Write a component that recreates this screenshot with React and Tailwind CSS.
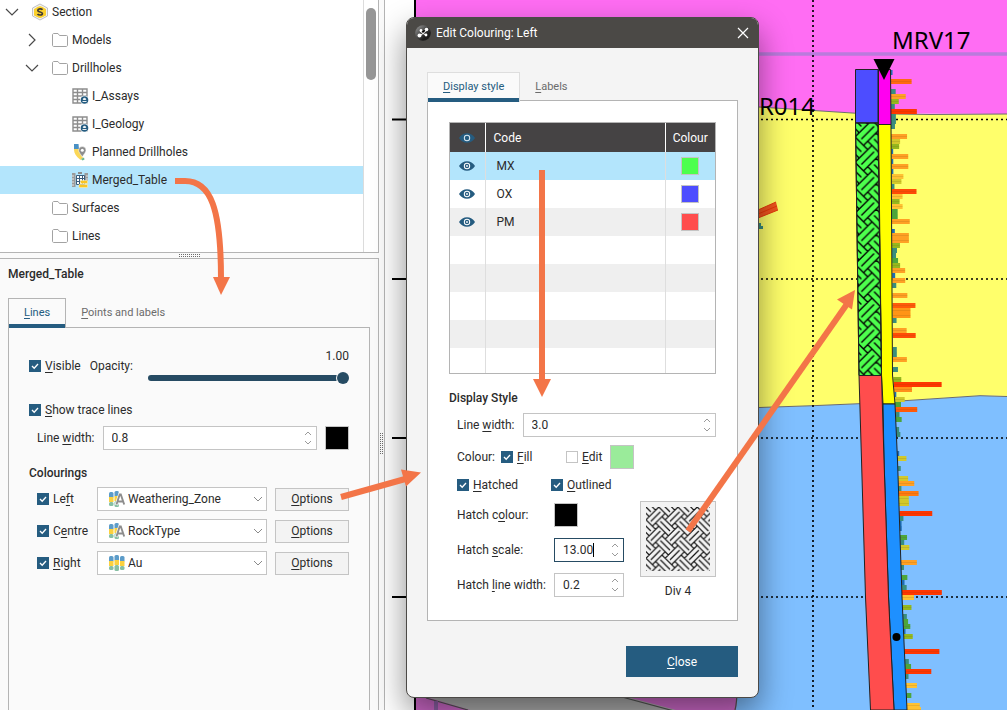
import { useId, useState } from 'react';
import clsx from 'clsx';

/* ---------- icons ---------- */

function Chevron({ open }) {
  return (
    <svg viewBox="0 0 16 16" className="size-4" fill="none" stroke="#4a4a4a" strokeWidth="1.2">
      <path d={open ? 'M2 5l6 6 6-6' : 'M5 2l6 6-6 6'} />
    </svg>
  );
}

function SectionIcon() {
  return (
    <svg viewBox="0 0 16 16" className="size-4 overflow-visible">
      <path d="M8 0l7.5 4v8L8 16 .5 12V4z" fill="#f1f1f1" stroke="#b5b5b5" strokeWidth="0.8" />
      <path d="M8 2.5l6 2.5v6.5L8 14l-6-2.500V5z" fill="#fbd02c" />
      <circle cx="8" cy="8" r="5.800" fill="#fbd02c" />
      <path d="M10.500 5.800C9.500 4.500 5.800 4.600 5.800 6.500c0 2 4.600 1 4.600 3 0 1.900-3.800 1.900-4.900.4" fill="none" stroke="#3d3a33" strokeWidth="1.700" />
    </svg>
  );
}

function FolderIcon() {
  return (
    <svg viewBox="0 0 16 16" className="size-4" fill="#fff" stroke="#a3a3a3">
      <path d="M.5 3c0-.8.4-1.500 1.200-1.500h4.300l1.500 2h7c.7 0 1 .5 1 1v8.500c0 .8-.4 1.500-1.200 1.500H1.700C.9 14.500.5 14 .5 13z" />
    </svg>
  );
}

function TableIcon() {
  return (
    <svg viewBox="0 0 16 16" className="size-4 overflow-visible">
      <path d="M1 1h14v14H1zM1 4.500h14M1 8h14M1 11.500h14M5.500 1v14M10.500 1v14" fill="#fff" stroke="#8d8d8d" strokeWidth="1.400" />
      <circle cx="12.500" cy="12" r="4.500" fill="#fff" />
      <circle cx="12.500" cy="12" r="3.800" fill="#255c80" />
      <path d="M10.500 13.500h4M11.300 11.500a1.200 1.200 0 0 1 2.400 0z" fill="#fff" stroke="#fff" strokeWidth="0.9" />
    </svg>
  );
}

function PlannedIcon() {
  return (
    <svg viewBox="0 0 16 16" className="size-4 overflow-visible">
      <path d="M2 0h4.500l.5 5H2z" fill="#4a90c4" />
      <path d="M2 5h4.500l4.500 9-2.500 2C5 13 2 10 2 5z" fill="#fbd758" />
      <path d="M9 15l3-1.500.5 2-2 1z" fill="#6db58f" />
      <path d="M10.300 2.500a3.700 3.700 0 0 1 3.700 3.700c0 2.300-2.200 3.800-3.700 6.800-1.500-3-3.700-4.500-3.700-6.800a3.700 3.700 0 0 1 3.700-3.700z" fill="#8d8d8d" stroke="#fff" strokeWidth="0.5" />
      <circle cx="10.300" cy="6.200" r="1.500" fill="#fff" />
    </svg>
  );
}

function MergedIcon() {
  return (
    <svg viewBox="0 0 16 16" className="size-4">
      <path d="M0 1h3.500v14H0zM12.500 1H16v8h-3.500z" fill="#9a9a9a" />
      <path d="M0 4h2M0 7h2M0 10h2M0 13h2M14 4h2M14 7h2" stroke="#e4e4e4" />
      <path d="M6 0h4v2H6z" fill="#8d8d8d" />
      <path d="M4.500 3.500h8v9h-8z" fill="#fff" stroke="#3c5d7c" />
      <path d="M4 6.500h8.500M4 9.500h8.500M7.500 3.500v9M10.500 3.500v9" stroke="#3c5d7c" />
      <path d="M8.500 8.500H15.500v3H8.500zM7 12.500h8.500v3H7z" fill="#fbc520" stroke="#fbeeb5" strokeWidth="0.6" />
    </svg>
  );
}

function ColumnsIcon({ category }) {
  return (
    <svg viewBox="0 0 16 16" className="size-4 overflow-visible">
      {[0, 5.5, 11].map((x, i) => {
        if (category && i === 2) return null;
        const y = i === 1 ? 0 : 1;
        return (
          <g key={x}>
            <rect x={x} y={y} width="4.500" height="6" rx="1.500" fill="#5c9cc9" />
            <rect x={x} y={y + 5} width="4.500" height="5" fill="#fbd13f" />
            <rect x={x} y={y + 10} width="4.500" height={i === 1 ? 6 : 4} rx="1.500" fill="#86bfa3" />
          </g>
        );
      })}
      {category && (
        <g fill="none">
          <path d="M7.500 14L11 3h1l3.500 11" stroke="#fff" strokeWidth="3.500" />
          <path d="M7.500 13.500L10.700 3.500h1.100l3.400 10M9 10.500h5" stroke="#8d8d8d" strokeWidth="1.900" />
        </g>
      )}
    </svg>
  );
}

function EyeIcon({ dark }) {
  const hole = dark ? '#454344' : '#fff';
  return (
    <svg viewBox="0 0 16 10" className="mx-auto h-[10px] w-4">
      <path d="M0 5C3.500-1.300 12.500-1.300 16 5c-3.500 6.300-12.500 6.300-16 0z" fill="#255c80" />
      <circle cx="8" cy="5" r="3.200" fill={dark ? '#dbe8f0' : hole} />
      <circle cx="8" cy="5" r="2.200" fill="#255c80" />
      <circle cx="8" cy="5" r="0.9" fill={dark ? '#255c80' : hole} />
    </svg>
  );
}

function AppIcon() {
  return (
    <svg viewBox="0 0 16 16" className="size-4">
      <defs>
        <linearGradient id="appBall" x1="0" y1="0" x2="1" y2="1">
          <stop offset="0.2" stopColor="#7a7a7a" />
          <stop offset="0.7" stopColor="#1c1c1c" />
        </linearGradient>
      </defs>
      <circle cx="8" cy="8" r="7.800" fill="url(#appBall)" />
      <path d="M5 6l3 2.500L12 5M8 8.500L4 11.500M8 8.500l3 1.500" stroke="#fff" strokeWidth="1" />
      <g fill="#fff">
        <circle cx="6" cy="5.500" r="1.400" />
        <circle cx="11.500" cy="4.500" r="1.800" />
        <circle cx="4.500" cy="10.500" r="2" />
        <circle cx="11" cy="10" r="1.400" />
      </g>
    </svg>
  );
}

/* ---------- controls ---------- */

// underlines the access key of a label
function Hot({ text, k }) {
  const i = text.indexOf(k);
  return (
    <span>
      {text.slice(0, i)}
      <u className="underline decoration-1 underline-offset-2">{k}</u>
      {text.slice(i + k.length)}
    </span>
  );
}

function Checkbox({ text, k, defaultChecked = true }) {
  return (
    <label className="flex h-4 items-center gap-1 whitespace-nowrap">
      <span className="relative flex size-3">
        <input
          type="checkbox"
          defaultChecked={defaultChecked}
          className="peer size-3 appearance-none border border-[#c4c4c4] bg-white checked:border-[#255c80] checked:bg-[#255c80]"
        />
        <svg
          viewBox="0 0 12 12"
          className="pointer-events-none absolute inset-0 hidden size-3 peer-checked:block"
          fill="none"
          stroke="#fff"
          strokeWidth="1.300"
        >
          <path d="M3 6l2.200 2.300L9 4" />
        </svg>
      </span>
      <Hot text={text} k={k} />
    </label>
  );
}

function Spin({ id, value, focused, className }) {
  return (
    <div className={clsx('relative flex h-6 border bg-white', focused ? 'border-[#264b63]' : 'border-[#c4c4c4]', className)}>
      <input
        id={id}
        type="text"
        inputMode="decimal"
        defaultValue={value}
        className="w-full min-w-0 bg-transparent pl-2 text-xs outline-none"
      />
      {focused && <span className="absolute top-1 left-[38px] h-[14px] w-px bg-black" />}
      <div className="flex w-4 shrink-0 flex-col items-center justify-between py-1">
        {['M1 4l3-3 3 3', 'M1 1l3 3 3-3'].map((d, i) => (
          <button key={d} type="button" aria-label={i ? 'Decrease' : 'Increase'}>
            <svg viewBox="0 0 8 5" className="h-[5px] w-2" fill="none" stroke="#9a9a9a">
              <path d={d} />
            </svg>
          </button>
        ))}
      </div>
    </div>
  );
}

function Swatch({ color, label }) {
  return (
    <button type="button" aria-label={label} className={clsx('size-6 shrink-0 border border-[#c4c4c4]', color)} />
  );
}

function Tabs({ tabs, active, onChange, className }) {
  return (
    <div role="tablist" className="relative z-10 flex">
      {tabs.map((t) => (
        <button
          key={t.text}
          type="button"
          role="tab"
          aria-selected={active === t.text}
          onClick={() => onChange(t.text)}
          className={clsx(
            'h-[30px] px-[15px] text-[11px]',
            active === t.text
              ? clsx('border border-b-0 text-[#255c80] shadow-[inset_0_-4px_0_#255c80]', className)
              : 'text-[#6b6b6b]'
          )}
        >
          <Hot text={t.text} k={t.k} />
        </button>
      ))}
    </div>
  );
}

/* ---------- left side ---------- */

const tree = [
  { text: 'Section', level: 0, icon: SectionIcon, open: true },
  { text: 'Models', level: 1, icon: FolderIcon, open: false },
  { text: 'Drillholes', level: 1, icon: FolderIcon, open: true },
  { text: 'I_Assays', level: 2, icon: TableIcon },
  { text: 'I_Geology', level: 2, icon: TableIcon },
  { text: 'Planned Drillholes', level: 2, icon: PlannedIcon },
  { text: 'Merged_Table', level: 2, icon: MergedIcon, selected: true },
  { text: 'Surfaces', level: 1, icon: FolderIcon },
  { text: 'Lines', level: 1, icon: FolderIcon },
];

const indents = ['pl-1', 'pl-6', 'pl-11'];

function ShapeTree() {
  return (
    <div className="flex h-[253px] shrink-0 overflow-hidden border-r border-b border-[#b4b4b4] bg-white">
      <ul className="-mt-0.5 flex-1">
        {tree.map(({ text, level, icon: Icon, open, selected }) => (
          <li key={text} className={clsx('flex h-7 items-center', indents[level], selected && 'bg-[#b3e5fc]')}>
            <span className="mr-3 size-4">{open !== undefined && <Chevron open={open} />}</span>
            <Icon />
            <span className="ml-1">{text}</span>
          </li>
        ))}
      </ul>
      <div className="w-[15px] border-l border-[#dcdcdc] pt-2 pl-0.5">
        <div className="h-[72px] w-[10px] rounded-full bg-[#969696]" />
      </div>
    </div>
  );
}

function Grip({ vertical }) {
  return (
    <svg className={vertical ? 'h-[22px] w-[5px]' : 'h-[5px] w-[22px]'} stroke="#6b6b6b" strokeDasharray="1 1">
      {vertical ? <path d="M1.500 0v22M3.500 0v22" /> : <path d="M0 1.500h22M0 3.500h22" />}
    </svg>
  );
}

const colourings = [
  { text: 'Left', k: 'f', column: 'Weathering_Zone', category: true },
  { text: 'Centre', k: 'e', column: 'RockType', category: true },
  { text: 'Right', k: 'R', column: 'Au', category: false },
];

function Properties() {
  const [tab, setTab] = useState('Lines');
  const widthId = useId();

  return (
    <div className="flex flex-1 flex-col border-t border-r border-[#b4b4b4] px-2 pt-[7px]">
      <h2 className="mb-4 h-4 font-medium">Merged_Table</h2>
      <Tabs
        tabs={[{ text: 'Lines', k: 'L' }, { text: 'Points and labels', k: 'P' }]}
        active={tab}
        onChange={setTab}
        className="border-[#b4b4b4] bg-[#fafafa]"
      />
      <div className="-mt-px flex-1 border border-b-0 border-[#b4b4b4] px-5 pt-5">
        <div className="flex items-center">
          <Checkbox text="Visible" k="V" />
          <label htmlFor="opacity" className="ml-[9px]">Opacity:</label>
          <div className="ml-[15px] flex-1">
            <output htmlFor="opacity" className="mb-2 block h-4 text-right">1.00</output>
            <input
              id="opacity"
              type="range"
              min="0"
              max="1"
              step="0.01"
              defaultValue="1"
              className="block h-3 w-full appearance-none bg-transparent [&::-webkit-slider-runnable-track]:h-[6px] [&::-webkit-slider-runnable-track]:rounded-full [&::-webkit-slider-runnable-track]:bg-[#264b63] [&::-webkit-slider-thumb]:-mt-[3px] [&::-webkit-slider-thumb]:size-3 [&::-webkit-slider-thumb]:appearance-none [&::-webkit-slider-thumb]:rounded-full [&::-webkit-slider-thumb]:bg-[#264b63] [&::-webkit-slider-thumb]:shadow-[0_0_0_1px_#fafafa]"
            />
          </div>
        </div>
        <div className="mt-[18px]">
          <Checkbox text="Show trace lines" k="S" />
        </div>
        <div className="mt-2 flex items-center gap-2 pl-2">
          <label htmlFor={widthId}><Hot text="Line width:" k="w" /></label>
          <Spin id={widthId} value="0.8" className="flex-1" />
          <Swatch color="bg-black" label="Line colour" />
        </div>

        <h3 className="mt-[15px] h-4 font-medium">Colourings</h3>
        <div className="mt-[6px] flex flex-col gap-2 pl-2">
          {colourings.map((c) => (
            <div key={c.text} className="flex items-center gap-2">
              <div className="w-[52px]">
                <Checkbox text={c.text} k={c.k} />
              </div>
              <div className="relative flex-1">
                <select
                  aria-label={`${c.text} column`}
                  className="block h-6 w-full appearance-none border border-[#c4c4c4] bg-white pl-[30px] text-xs"
                >
                  <option>{c.column}</option>
                </select>
                <span className="pointer-events-none absolute top-1 left-3">
                  <ColumnsIcon category={c.category} />
                </span>
                <svg viewBox="0 0 8 5" className="pointer-events-none absolute top-[10px] right-[5px] h-[5px] w-2 overflow-visible" fill="none" stroke="#8a8a8a">
                  <path d="M0 0l4 4 4-4" />
                </svg>
              </div>
              <button type="button" className="h-[23px] w-[74px] border border-[#c4c4c4] bg-[#f3f3f3]">
                <Hot text="Options" k="O" />
              </button>
            </div>
          ))}
        </div>
      </div>
    </div>
  );
}

/* ---------- section view ---------- */

const O = '#ffa024';
const R = '#ff3600';
const T = '#3a8d7c';
const G = '#4da53a';
const L = '#94b81e';
const Y = '#d2c92b';
const A = '#ffc232';
const B = '#1d6db5';

// gold assays down the hole: depth, bar length, colour
const assays = [
  [72, 2, B], [81, 21, '#ff6a10'], [91, 5, T], [96, 15, O], [101, 8, L], [106, 4, T], [111, 26, R], [116, 5, T],
  [121, 5, T], [126, 4, T], [136, 16, O], [141, 9, Y], [146, 8, L], [151, 2, B], [156, 17, O], [161, 2, B],
  [166, 17, O], [171, 2, B], [176, 12, A], [181, 10, Y], [186, 3, T], [191, 25, '#ff4a05'], [196, 11, A], [201, 8, L],
  [206, 11, A], [211, 6, G], [216, 6, G], [221, 18, O], [231, 3, B], [235, 17, O], [240, 17, O], [245, 8, L],
  [250, 5, T], [255, 4, T], [260, 6, G], [265, 8, L], [270, 13, O], [275, 3, B], [280, 13, O], [285, 4, T],
  [295, 15, O], [305, 23, '#ff5a0a'], [310, 18, '#ff9416'], [315, 18, '#ff9416'], [320, 4, T], [330, 14, O],
  [335, 23, '#ff4a05'], [349, 4, T], [354, 4, T], [359, 14, O], [369, 5, T], [379, 8, L], [384, 48, R],
  [389, 18, '#ff8f1a'], [394, 2, B], [399, 10, Y], [404, 6, G], [409, 22, '#ff5a0a'], [414, 4, T], [419, 6, G],
  [429, 3, T], [434, 4, T], [453, 2, B], [458, 9, Y], [468, 3, T], [478, 10, Y], [483, 16, O], [488, 3, T],
  [493, 20, '#ff7a10'], [498, 10, Y], [503, 10, Y], [513, 33, R], [518, 4, T], [523, 2, B], [528, 2, B], [537, 7, G],
  [542, 4, T], [547, 9, Y], [562, 16, O], [567, 3, T], [577, 6, G], [582, 3, B], [587, 5, T], [592, 40, R],
  [597, 12, A], [607, 9, L], [616, 4, T], [621, 5, G], [626, 7, G], [631, 2, B], [636, 9, L], [651, 35, R],
  [661, 4, T], [666, 6, G], [671, 26, R], [676, 3, T], [685, 11, A], [695, 5, G], [705, 13, A], [709, 14, A],
];

// right edge of the hole trace, it bends away with depth
const trace = [[69, 890.5], [375, 893], [404, 895], [460, 897.5], [597, 902], [710, 907]];

function traceX(y) {
  const i = Math.max(1, trace.findIndex(([ty]) => ty >= y));
  const [y0, x0] = trace[i - 1];
  const [y1, x1] = trace[i];
  return x0 + ((y - y0) / (y1 - y0)) * (x1 - x0);
}

// one 24x24 tile of diagonal strips: rising strip in the middle, falling ones at the corners
const weave =
  'M0 16L16 0M8 24L24 8M6 18L18 6' +
  [[0, 0], [24, 0], [0, 24], [24, 24]]
    .map(([x, y]) => `M${x - 4} ${y - 12}l16 16M${x - 12} ${y - 4}l16 16M${x - 6} ${y - 6}l12 12`)
    .join('');

function SectionView() {
  const rows = [119.5, 279, 438, 597];
  return (
    <svg viewBox="385 0 622 710" preserveAspectRatio="xMinYMin slice" className="h-full w-full">
      <defs>
        <pattern id="holeHatch" width="24" height="24" patternUnits="userSpaceOnUse" patternTransform="translate(855 120) scale(1.060)">
          <path d={weave} fill="none" stroke="#000" strokeWidth="1.300" />
        </pattern>
      </defs>

      <rect x="385" width="30" height="710" fill="#fff" />
      <path d="M416 0h591v114L860 113.500 759 107 416 90z" fill="#ff6df3" />
      <path d="M416 90L759 107l101 6.500 70 1 77-.5v282l-27-.5-121 8-46 2.300-54 1.500-343 2z" fill="#ffff6b" />
      <path d="M416 409l343-1.500 54-1.800 46-2 121-8 27 .8V710H416z" fill="#7fbfff" />
      <path d="M416 600h310c12 30 14 70 10 110H416z" fill="#cf69ca" />
      <path d="M416 694h200l60 16H470z" fill="#b0b0b0" />
      <path d="M426 698l42 12M622 697l52 14M737 690q0 12-2 20" fill="none" stroke="#555" strokeWidth="1.200" />
      <path d="M436 701v9" stroke="#8f62a8" strokeWidth="4" />
      <path d="M416 54h591" stroke="#ba7bdc" strokeWidth="3.500" />
      <path d="M759 107l101 6.500 70 1 77-.5M759 407.500l54-1.800 46-2 121-8 27 .8" fill="none" stroke="#6c6c6c" />
      <path d="M415 0v710" stroke="#000" strokeWidth="2" />
      <path d="M813 0v710" stroke="#000" strokeWidth="1.700" strokeDasharray="2 3" />
      {rows.map((y) => (
        <g key={y} stroke="#000">
          <path d={`M392 ${y}h23`} strokeWidth="2" />
          <path d={`M416 ${y}h591`} strokeWidth="1.700" strokeDasharray="2 3" />
        </g>
      ))}

      {/* neighbouring hole, mostly hidden */}
      <path d="M758 210l18-8 2 8-20 8z" fill="#f0551f" />
      <path d="M758 210l18-8M758 214l19-8M758 218l20-8" stroke="#e8380a" />
      <path d="M759 223h2v3h2v3h-4z" fill={T} />

      {assays.map(([y, w, fill], i) => (
        <rect key={i} x={traceX(y)} y={y - 2} width={w} height="5" fill={fill} />
      ))}
      {assays.filter(([, w]) => w > 6).map(([y, w], i) => (
        <path key={i} d={`M${traceX(y)} ${y + 0.5}h${w}`} stroke="#6b4a12" strokeOpacity="0.15" />
      ))}

      <g stroke="#222" strokeWidth="1">
        <path d="M855.500 69.500h22.500v53.500h-22.500z" fill="#4d4dff" />
        <path d="M878.500 69.500h12l.5 55h-12.500z" fill="#ff00f0" />
        <path d="M878.500 124.500H891L892.500 375l2.500 29h-12l-1.500-29z" fill="#ffff00" />
        <path d="M883 404h12l2.500 56 4.500 137 5 113h-13l-5.500-113-4.500-137z" fill="#1e90ff" />
        <path d="M855.500 123H878l3.500 252.500H859z" fill="#4dff4d" />
        <path d="M855.500 123H878l3.500 252.500H859z" fill="url(#holeHatch)" />
        <path d="M859 375.500h22.500L884 460l4.500 137 5.500 113h-23.500l-5-113-4-137z" fill="#ff4d4d" />
      </g>
      <path d="M873.500 59h21L884 80z" />
      <circle cx="896.500" cy="637" r="4" />
      <g fontSize="24" className="font-['Noto_Sans',sans-serif]">
        <text x="892" y="49">MRV17</text>
        <text x="815" y="115" textAnchor="end">R014</text>
      </g>
    </svg>
  );
}

/* ---------- dialog ---------- */

const codes = [
  { code: 'MX', color: 'bg-[#4dff4d]', row: 'bg-[#b3e5fc]' },
  { code: 'OX', color: 'bg-[#4d4dff]', row: 'bg-white' },
  { code: 'PM', color: 'bg-[#ff4d4d]', row: 'bg-[#efefef]' },
];

function CodeTable() {
  return (
    <div className="h-[252px] overflow-hidden border border-[#b4b4b4]">
      <table className="w-full table-fixed border-collapse">
        <thead>
          <tr className="h-[29px] bg-[#454344] text-left text-white">
            <th className="w-[35px] border-r border-white font-normal"><EyeIcon dark /></th>
            <th className="border-r border-white pl-2 font-normal">Code</th>
            <th className="w-[50px] text-center font-normal">Colour</th>
          </tr>
        </thead>
        <tbody>
          {codes.map((c) => (
            <tr key={c.code} className={clsx('h-7', c.row)}>
              <td className="border-r border-[#dedede]"><EyeIcon /></td>
              <td className="border-r border-[#dedede] pl-[11px]">{c.code}</td>
              <td><span className={clsx('mx-auto block size-[18px] border border-[#c4c4c4]', c.color)} /></td>
            </tr>
          ))}
          {[3, 4, 5, 6, 7].map((n) => (
            <tr key={n} className={clsx('h-7', n % 2 ? 'bg-white' : 'bg-[#efefef]')}>
              <td className="border-r border-[#dedede]" />
              <td className="border-r border-[#dedede]" />
              <td />
            </tr>
          ))}
        </tbody>
      </table>
    </div>
  );
}

function HatchPreview() {
  return (
    <div className="w-[76px] text-center">
      <button type="button" aria-label="Hatch pattern" className="flex size-[76px] items-center justify-center border border-[#c4c4c4] bg-[#f3f3f3]">
        <svg viewBox="0 0 64 64" className="size-16">
          <defs>
            <pattern id="previewHatch" width="24" height="24" patternUnits="userSpaceOnUse" patternTransform="scale(0.800)">
              <path d={weave} fill="none" stroke="#111" strokeWidth="1.500" />
            </pattern>
          </defs>
          <rect width="64" height="64" fill="url(#previewHatch)" />
        </svg>
      </button>
      <p className="mt-[6px]">Div 4</p>
    </div>
  );
}

function ColouringDialog() {
  const [tab, setTab] = useState('Display style');

  return (
    <div
      role="dialog"
      aria-label="Edit Colouring: Left"
      className="absolute top-[17px] left-[406px] w-[353px] overflow-hidden rounded-lg border border-[#4b4946] bg-[#f4f4f4] shadow-[0_14px_32px_rgba(0,0,0,0.45)]"
    >
      <div className="flex h-[30px] items-center bg-[#4b4946] px-2 text-white">
        <AppIcon />
        <span className="ml-[5px] flex-1">Edit Colouring: Left</span>
        <button type="button" aria-label="Close window" className="px-px">
          <svg viewBox="0 0 12 12" className="size-3" stroke="#fff" strokeWidth="1.200">
            <path d="M1 1l10 10M11 1L1 11" />
          </svg>
        </button>
      </div>

      <div className="px-5 pt-6 pb-5">
        <Tabs
          tabs={[{ text: 'Display style', k: 'D' }, { text: 'Labels', k: 'L' }]}
          active={tab}
          onChange={setTab}
          className="border-[#dedede] bg-[#fafafa]"
        />
        <div className="-mt-0.5 border border-[#b4b4b4] bg-white px-[21px] pt-[21px] pb-[21px]">
          <CodeTable />
          <h3 className="mt-4 h-4 font-medium">Display Style</h3>
          <div className="mt-[7px] flex flex-col gap-2 pl-2">
            <div className="flex items-center gap-2">
              <label htmlFor="displayWidth"><Hot text="Line width:" k="w" /></label>
              <Spin id="displayWidth" value="3.0" className="flex-1" />
            </div>
            <div className="flex items-center">
              <span className="mr-[6px]">Colour:</span>
              <div className="w-[65px]"><Checkbox text="Fill" k="F" /></div>
              <Checkbox text="Edit" k="E" defaultChecked={false} />
              <div className="ml-2 flex"><Swatch color="bg-[#9aeb9a]" label="Fill colour" /></div>
            </div>
            <div className="flex">
              <div className="w-[94px]"><Checkbox text="Hatched" k="H" /></div>
              <Checkbox text="Outlined" k="O" />
            </div>
            <div className="flex justify-between">
              <div className="grid grid-cols-[97px_70px] content-start items-center gap-y-[11px] pt-0.5">
                <span><Hot text="Hatch colour:" k="o" /></span>
                <Swatch color="bg-black" label="Hatch colour" />
                <label htmlFor="hatchScale"><Hot text="Hatch scale:" k="s" /></label>
                <Spin id="hatchScale" value="13.00" focused />
                <label htmlFor="hatchWidth"><Hot text="Hatch line width:" k="l" /></label>
                <Spin id="hatchWidth" value="0.2" />
              </div>
              <HatchPreview />
            </div>
          </div>
        </div>
        <div className="mt-[25px] flex justify-end">
          <button type="button" className="h-[31px] w-28 bg-[#255c80] text-white">
            <Hot text="Close" k="C" />
          </button>
        </div>
      </div>
    </div>
  );
}

/* ---------- callout arrows ---------- */

function Callouts() {
  return (
    <svg
      viewBox="0 0 1007 710"
      preserveAspectRatio="xMinYMin slice"
      className="pointer-events-none absolute top-0 left-0 h-full w-full"
      fill="#f37548"
    >
      <g fill="none" stroke="#f37548" strokeWidth="6">
        <path d="M175 181h10c26 0 36 28 36 98" />
        <path d="M542 170v212" />
        <path d="M341 497l66-18.500" />
        <path d="M688 531l159-227" />
      </g>
      <path d="M213 277h17l-9 18z" />
      <path d="M533 379h18l-9 18z" />
      <path d="M401 469.500l20 3-15 14z" />
      <path d="M837 299.500l18-9.500-3 19.500z" />
    </svg>
  );
}

export default function App() {
  return (
    <div className="relative flex h-screen overflow-hidden bg-[#fafafa] font-[Roboto,sans-serif] text-xs text-[#2b2b2b]">
      <aside className="flex w-[379px] shrink-0 flex-col">
        <ShapeTree />
        <div className="flex h-[5px] shrink-0 justify-center">
          <Grip />
        </div>
        <Properties />
      </aside>
      <div className="flex w-[6px] shrink-0 items-center border-r border-[#b4b4b4] pt-[178px]">
        <Grip vertical />
      </div>
      <main className="min-w-0 flex-1">
        <SectionView />
      </main>
      <ColouringDialog />
      <Callouts />
    </div>
  );
}
